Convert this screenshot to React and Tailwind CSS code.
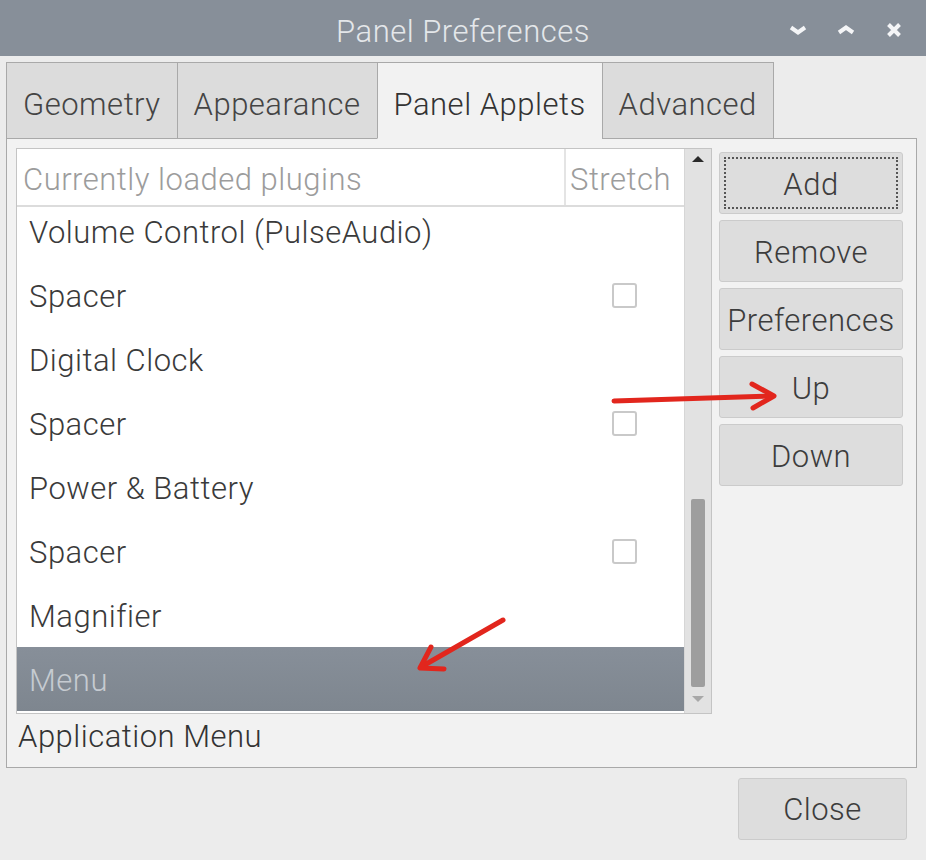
import { useState } from 'react'

const rows = [
  { name: 'Volume Control (PulseAudio)', check: false },
  { name: 'Spacer', check: true },
  { name: 'Digital Clock', check: false },
  { name: 'Spacer', check: true },
  { name: 'Power & Battery', check: false },
  { name: 'Spacer', check: true },
  { name: 'Magnifier', check: false },
  { name: 'Menu', check: false, selected: true },
]

const tabs = ['Geometry', 'Appearance', 'Panel Applets', 'Advanced']
const buttons = ['Add', 'Remove', 'Preferences', 'Up', 'Down']

export default function App() {
  const [active] = useState('Panel Applets')

  return (
    <div
      className="relative w-[926px] h-[860px] bg-[#ececec] overflow-hidden font-light text-[31px] tracking-[0.5px] text-[#3a3a3a]"
      style={{ fontFamily: 'Roboto, "Noto Sans", sans-serif' }}
    >
      {/* Title bar */}
      <div className="relative h-[56px] bg-[#878f99] flex items-center justify-center">
        <span className="text-[#e4e7ea] leading-none pt-[6px]">Panel Preferences</span>
        <div className="absolute right-[21px] top-0 h-full flex items-center gap-[26px] text-[#f4f5f7]">
          <svg width="22" height="22" viewBox="0 0 22 22">
            <path d="M4 10.5 L11 15.5 L18 10.5" fill="none" stroke="currentColor" strokeWidth="4" />
          </svg>
          <svg width="22" height="22" viewBox="0 0 22 22">
            <path d="M4 15.5 L11 10.5 L18 15.5" fill="none" stroke="currentColor" strokeWidth="4" />
          </svg>
          <svg width="22" height="22" viewBox="0 0 22 22">
            <path d="M5.5 7.5 L16.5 18.5 M16.5 7.5 L5.5 18.5" fill="none" stroke="currentColor" strokeWidth="4" />
          </svg>
        </div>
      </div>

      <div className="px-[6px] pt-[6px]">
        {/* Tabs */}
        <div className="flex h-[77px] relative z-10">
          {tabs.map((t) => (
            <div
              key={t}
              className={`h-[77px] px-[16px] flex items-center border border-[#a9a9a9] -ml-px first:ml-0 ${
                t === active ? 'bg-[#f2f2f2] border-b-[#f2f2f2] text-[#333]' : 'bg-[#dcdcdc] text-[#444]'
              }`}
            >
              <span className="pt-[10px]">{t}</span>
            </div>
          ))}
        </div>

        {/* Notebook page */}
        <div className="-mt-px w-[911px] h-[630px] border border-[#a9a9a9] bg-[#f2f2f2] flex pl-[9px] pt-[9px]">
          <div className="flex flex-col">
            <div className="w-[696px] h-[566px] border border-[#c4c4c4] bg-white flex">
              <div className="flex-1 flex flex-col overflow-hidden">
                <div className="h-[58px] flex border-b-2 border-[#dcdcdc] text-[#9c9c9c] shrink-0">
                  <div className="w-[549px] border-r-2 border-[#e4e4e4] pl-[6px] flex items-center pt-[6px]">
                    Currently loaded plugins
                  </div>
                  <div className="flex-1 pl-[4px] flex items-center pt-[6px]">Stretch</div>
                </div>
                <div className="flex-1 overflow-hidden">
                  <div className="-mt-[8px]">
                    {rows.map((r, i) => (
                      <div
                        key={i}
                        className={`h-[64px] flex items-center ${
                          r.selected ? 'bg-gradient-to-b from-[#878f99] to-[#7e868f] text-[#c6cbd1]' : ''
                        }`}
                      >
                        <div className="w-[595px] pl-[12px] pt-[5px]">{r.name}</div>
                        {r.check && (
                          <div className="w-[25px] h-[25px] border-2 border-[#c9c9c9] rounded-[3px] bg-white" />
                        )}
                      </div>
                    ))}
                  </div>
                </div>
              </div>
              {/* Scrollbar */}
              <div className="w-[27px] bg-[#e2e2e2] border-l border-[#d6d6d6] flex flex-col items-center">
                <svg width="16" height="12" viewBox="0 0 16 12" className="mt-[4px]">
                  <path d="M2 9 L8 3 L14 9 Z" fill="#2a2a2a" />
                </svg>
                <div className="flex-1" />
                <div className="w-[14px] h-[188px] bg-[#9e9e9e] rounded-[2px]" />
                <svg width="16" height="12" viewBox="0 0 16 12" className="mt-[6px] mb-[8px]">
                  <path d="M2 3 L8 9 L14 3 Z" fill="#a8a8a8" />
                </svg>
              </div>
            </div>
            <div className="pl-[2px] text-[#333]">Application Menu</div>
          </div>

          {/* Side buttons */}
          <div className="ml-[7px] mt-[4px] flex flex-col gap-[6px]">
            {buttons.map((b) => (
              <div
                key={b}
                className="relative w-[184px] h-[62px] bg-[#dddddd] border border-[#cbcbcb] rounded-[3px] flex items-center justify-center text-[#3c3c3c]"
              >
                {b === 'Add' && (
                  <div className="absolute inset-[4px] border-2 border-dotted border-[#555]" />
                )}
                <span className="pt-[4px]">{b}</span>
              </div>
            ))}
          </div>
        </div>

        {/* Close */}
        <div className="flex justify-end pr-[13px] pt-[10px]">
          <div className="w-[169px] h-[62px] bg-[#dddddd] border border-[#cbcbcb] rounded-[3px] flex items-center justify-center text-[#3c3c3c]">
            <span className="pt-[2px]">Close</span>
          </div>
        </div>
      </div>

      {/* Annotation arrows */}
      <svg className="absolute left-0 top-0 pointer-events-none" width="926" height="860">
        <g stroke="#e2261d" strokeWidth="5" strokeLinecap="round" strokeLinejoin="round" fill="none">
          <path d="M614 401 L772 396" />
          <path d="M752 384 L774 396 L753 408" />
          <path d="M503 620 L421 667" />
          <path d="M431 647 L420 668 L444 669" />
        </g>
      </svg>
    </div>
  )
}
